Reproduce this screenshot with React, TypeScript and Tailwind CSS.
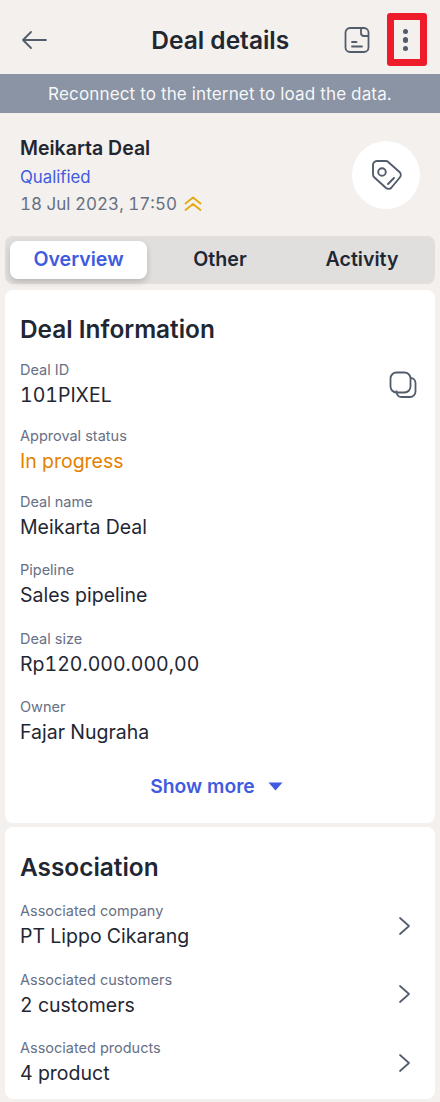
const FONT = "font-['Inter',sans-serif]";

function Field({ label, value, valueClass = "text-[#1f2733]", className = "" }: { label: string; value: string; valueClass?: string; className?: string }) {
  return (
    <div className={`flex flex-col ${className}`}>
      <div className="text-[14.5px] leading-[20px] text-[#667085]">{label}</div>
      <div className={`text-[19.5px] leading-[28px] mt-[1px] tabular-nums ${valueClass}`}>{value}</div>
    </div>
  );
}

function Chevron() {
  return (
    <svg width="14" height="20" viewBox="0 0 14 20" fill="none" stroke="#525c6b" strokeWidth="1.7" strokeLinecap="round" strokeLinejoin="round">
      <path d="M3 2 L12 10 L3 18" />
    </svg>
  );
}

function AssocRow({ label, value }: { label: string; value: string }) {
  return (
    <div className="flex items-center justify-between pr-[6px]">
      <Field label={label} value={value} />
      <Chevron />
    </div>
  );
}

export default function App() {
  return (
    <div className={`${FONT} w-[440px] h-[1102px] overflow-hidden bg-[#f3f0ed] relative`}>
      <header className="h-[74px] pt-[6px] grid grid-cols-[1fr_auto_1fr] items-center pl-[21px] pr-[14.5px]">
        <svg width="26" height="20" viewBox="0 0 26 20" fill="none" stroke="#525c6b" strokeWidth="1.8" strokeLinecap="round" strokeLinejoin="round">
          <path d="M25 10 H2 M10 2 L2 10 L10 18" />
        </svg>
        <h1 className="text-[24.5px] font-semibold text-[#1f2733] leading-[30px] pr-[6px]">Deal details</h1>
        <div className="flex items-center justify-end">
          <svg width="26" height="28" viewBox="0 0 26 28" fill="none" stroke="#525c6b" strokeWidth="1.8" strokeLinecap="round" strokeLinejoin="round">
            <path d="M17 2 H6 A4.500 4.500 0 0 0 1.500 6.500 V21.500 A4.500 4.500 0 0 0 6 26 H20 A4.500 4.500 0 0 0 24.500 21.500 V6.500 A4.500 4.500 0 0 0 20 2 H17 V7 A3 3 0 0 0 20 10 H24" />
            <path d="M8 16 H12.500 M8 20.500 H18" />
          </svg>
          <div className="w-[40px] ml-[16px] flex flex-col items-center gap-[3px]">
            <span className="w-[5.500px] h-[5.500px] rounded-full bg-[#525c6b]" />
            <span className="w-[5.500px] h-[5.500px] rounded-full bg-[#525c6b]" />
            <span className="w-[5.500px] h-[5.500px] rounded-full bg-[#525c6b]" />
          </div>
        </div>
      </header>
      <div className="absolute left-[387px] top-[12.500px] w-[40px] h-[53.500px] border-[7px] border-[#ee1c2a] rounded-[3px]" />

      <div className="h-[39px] bg-[#8a94a4] flex items-center justify-center text-[17.100px] text-white/95 tracking-[0.1px]">
        Reconnect to the internet to load the data.
      </div>

      <section className="h-[123px] pt-[2px] flex items-center justify-between pl-[20px] pr-[20px]">
        <div className="flex flex-col">
          <div className="text-[19.500px] leading-[26px] font-semibold text-[#1f2733]">Meikarta Deal</div>
          <div className="text-[16.800px] leading-[24px] mt-[4px] text-[#3f5be0]">Qualified</div>
          <div className="flex items-center mt-[3px]">
            <span className="text-[17px] leading-[24px] text-[#667085] tabular-nums">18 Jul 2023, 17:50</span>
            <svg className="ml-[7px]" width="18" height="16" viewBox="0 0 18 16" fill="none" stroke="#e3a80d" strokeWidth="1.800" strokeLinecap="round" strokeLinejoin="round">
              <path d="M1.500 7.500 L9 1.500 L16.500 7.500 M1.500 14 L9 8 L16.500 14" />
            </svg>
          </div>
        </div>
        <div className="w-[68px] h-[68px] mb-[2px] rounded-full bg-white flex items-center justify-center">
          <svg width="32" height="32" viewBox="0 0 32 32" fill="none" stroke="#525c6b" strokeWidth="1.900" strokeLinecap="round" strokeLinejoin="round">
            <path d="M3 6.500 A4 4 0 0 1 7 2 H15.500 A4 4 0 0 1 18.500 3.200 L29.500 13 A4 4 0 0 1 29.800 18.500 L21.500 28.500 A4 4 0 0 1 16 29 L4.500 18.500 A4 4 0 0 1 3 15.500 Z" />
            <circle cx="12" cy="13" r="3.800" />
            <path d="M18 25 L24 19" />
          </svg>
        </div>
      </section>

      <div className="mx-[5px] h-[48px] rounded-[8px] bg-[#e0dfdd] flex items-center px-[5px] text-[19.600px] font-semibold">
        <div className="w-[137px] h-[38px] rounded-[8px] bg-white shadow-[0_3px_6px_rgba(0,0,0,0.18)] flex items-center justify-center text-[#3f5be0]">Overview</div>
        <div className="w-[146px] text-center text-[#1f2733]">Other</div>
        <div className="w-[137px] text-center text-[#1f2733] pl-[1px]">Activity</div>
      </div>

      <section className="mx-[5px] mt-[6px] h-[533px] rounded-[8px] bg-white pl-[15px] pr-[18px] pt-[23px] flex flex-col">
        <h2 className="text-[24.400px] leading-[32px] font-semibold text-[#1f2733]">Deal Information</h2>
        <div className="flex items-center justify-between mt-[15px]">
          <Field label="Deal ID" value="101PIXEL" />
          <svg width="28" height="28" viewBox="0 0 28 28" fill="none" stroke="#525c6b" strokeWidth="1.800">
            <path d="M7.500 19.500 V21 A5 5 0 0 0 12.500 26 H21 A5.500 5.500 0 0 0 26.500 20.500 V12 A5 5 0 0 0 21.500 7" />
            <rect x="1.500" y="1.500" width="20" height="20" rx="6" />
          </svg>
        </div>
        <Field className="mt-[17px]" label="Approval status" value="In progress" valueClass="text-[#e28200]" />
        <Field className="mt-[17px]" label="Deal name" value="Meikarta Deal" />
        <Field className="mt-[19px]" label="Pipeline" value="Sales pipeline" />
        <Field className="mt-[20px]" label="Deal size" value="Rp120.000.000,00" />
        <Field className="mt-[19px]" label="Owner" value="Fajar Nugraha" />
        <div className="flex items-center justify-center mt-[26px] gap-[13px] pr-[4px]">
          <span className="text-[19.300px] leading-[28px] font-semibold text-[#3f5be0]">Show more</span>
          <svg width="15" height="9" viewBox="0 0 15 9" fill="#3f5be0"><path d="M0.500 0.500 H14.500 L7.500 8.500 Z" /></svg>
        </div>
      </section>

      <section className="mx-[5px] mt-[4px] h-[272px] rounded-[8px] bg-white pl-[15px] pr-[18px] pt-[24px] flex flex-col">
        <h2 className="text-[24.400px] leading-[32px] font-semibold text-[#1f2733] mb-[18px]">Association</h2>
        <div className="flex flex-col gap-[19.500px]">
          <AssocRow label="Associated company" value="PT Lippo Cikarang" />
          <AssocRow label="Associated customers" value="2 customers" />
          <AssocRow label="Associated products" value="4 product" />
        </div>
      </section>
    </div>
  );
}
